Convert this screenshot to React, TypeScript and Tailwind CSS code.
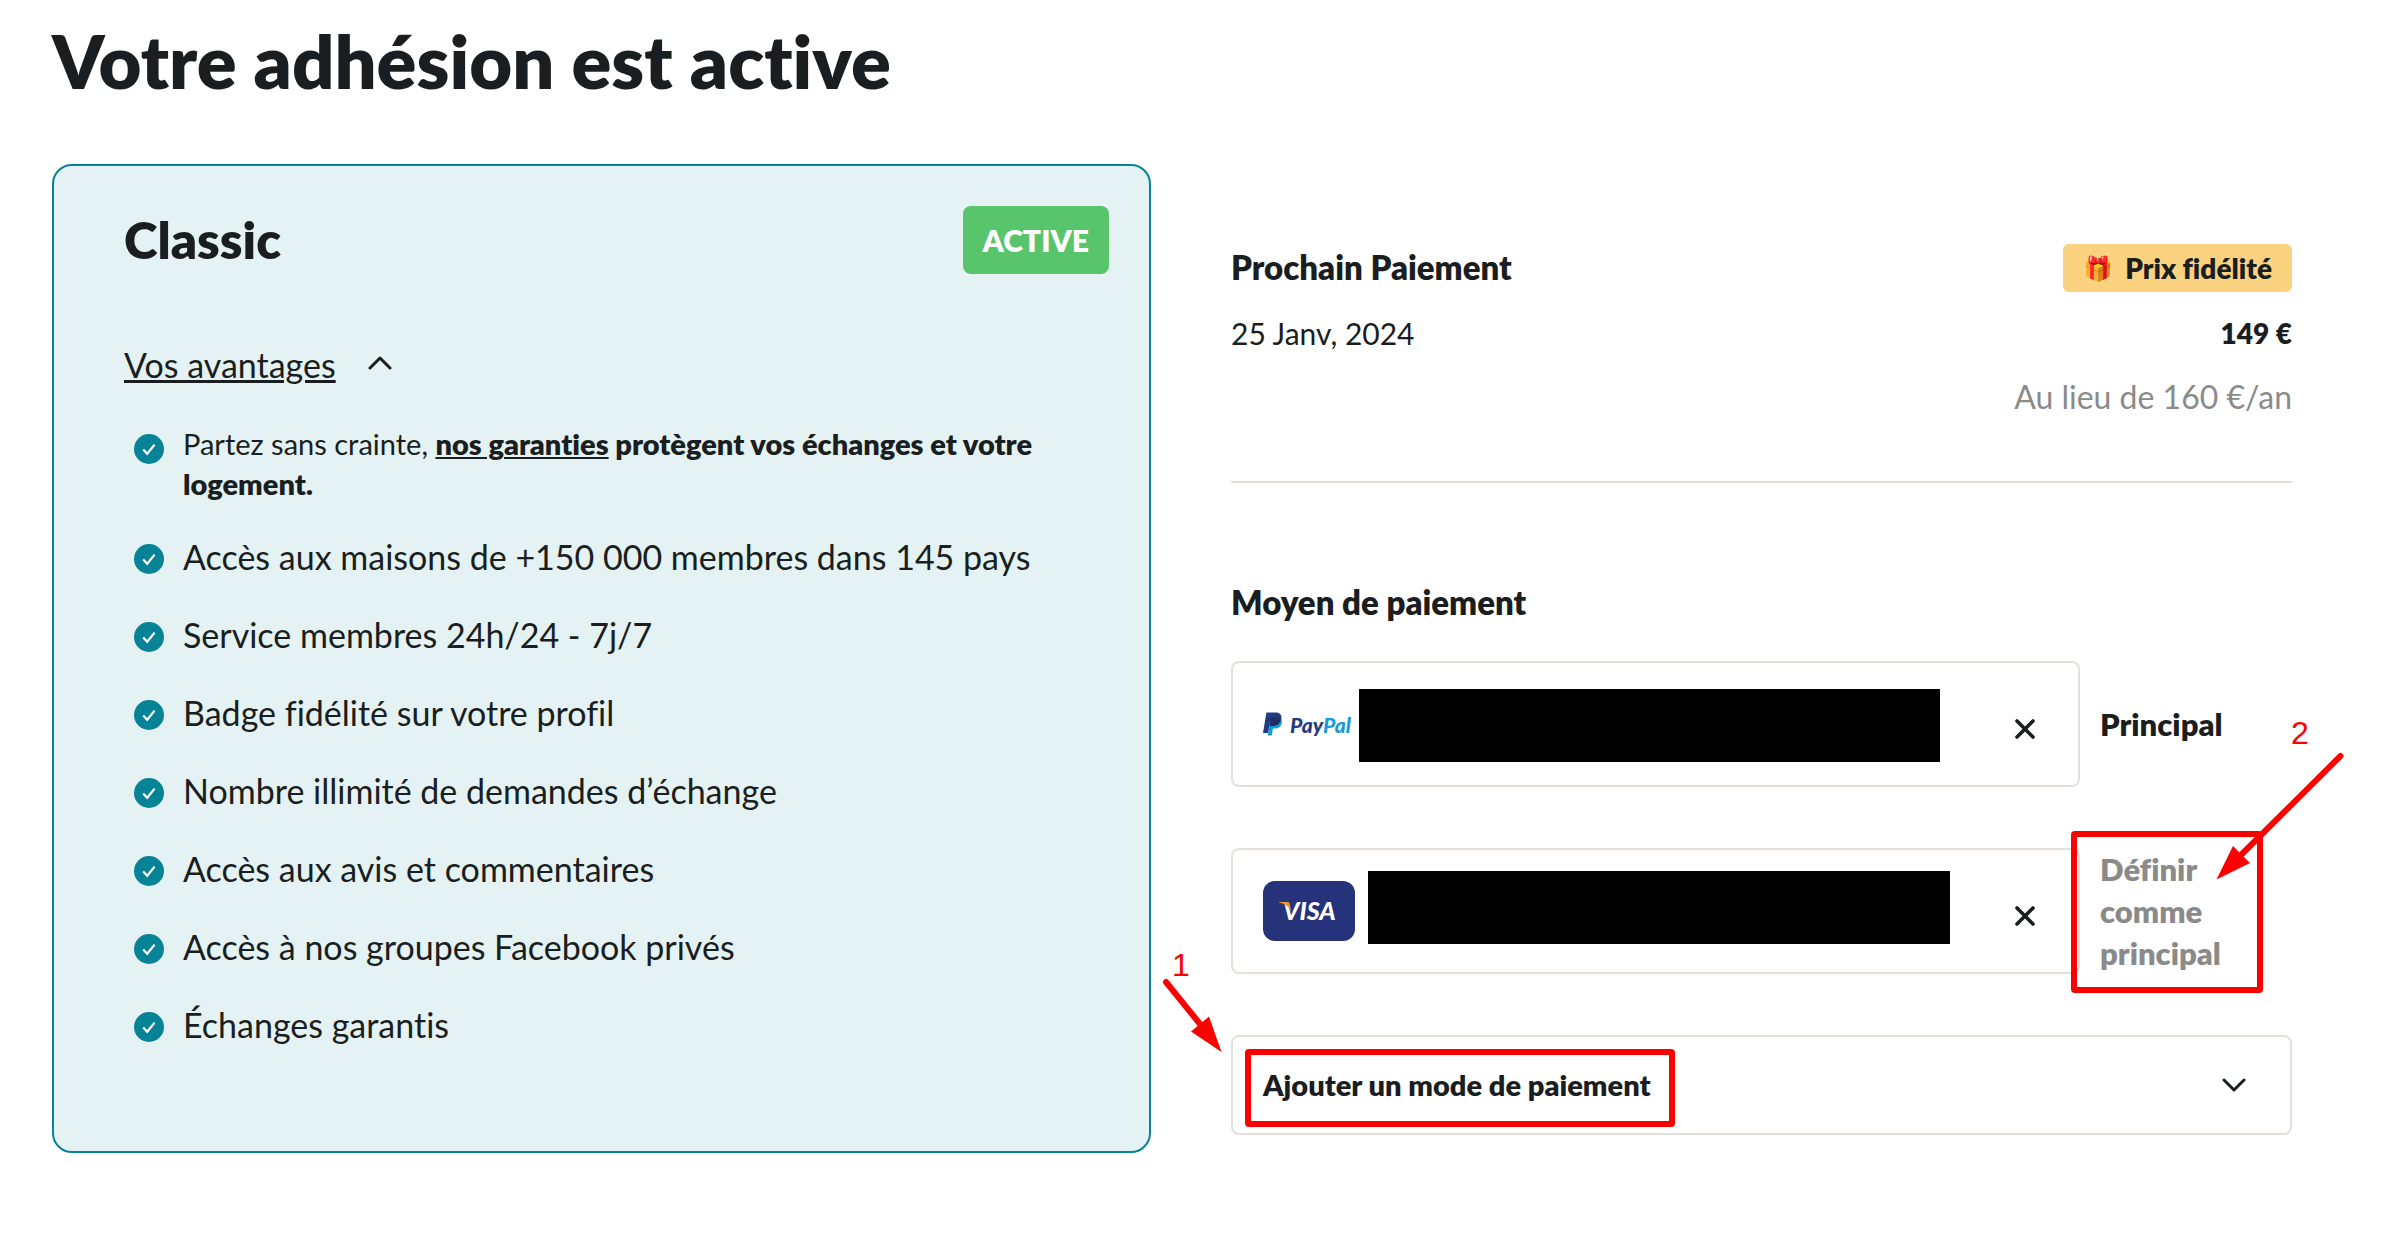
import React, { useState } from 'react';
import clsx from 'clsx';

const advantages = [
  'Accès aux maisons de +150 000 membres dans 145 pays',
  'Service membres 24h/24 - 7j/7',
  'Badge fidélité sur votre profil',
  'Nombre illimité de demandes d’échange',
  'Accès aux avis et commentaires',
  'Accès à nos groupes Facebook privés',
  'Échanges garantis',
];

interface IconProps {
  className?: string;
}

const CheckBadge: React.FC<IconProps> = ({ className }) => (
  <svg viewBox="0 0 30 30" className={clsx('h-[30px] w-[30px] shrink-0', className)} aria-hidden="true">
    <circle cx="15" cy="15" r="15" fill="#068396" />
    <path d="M9.2 15.6l4 4.2 7.4-9.2" fill="none" stroke="#fff" strokeWidth="2.2" />
  </svg>
);

const Chevron: React.FC<IconProps> = ({ className }) => (
  <svg viewBox="0 0 24 14" className={clsx('h-[14px] w-6 shrink-0', className)} aria-hidden="true">
    <path
      d="M2 2l10 10L22 2"
      fill="none"
      stroke="currentColor"
      strokeWidth="3"
      strokeLinecap="round"
      strokeLinejoin="round"
    />
  </svg>
);

const PayPalLogo = () => (
  <svg viewBox="0 0 92 30" className="h-[30px] w-[92px] shrink-0" role="img" aria-label="PayPal">
    <path d="M3.4 3.5h9c4.6 0 6.6 2.6 5.9 6.6-.9 5-4 6.9-8.3 6.9H6.6L5 24H0z" fill="#253b80" />
    <path
      d="M17.8 9.5c1.1 1.4 1.3 3 .9 4.800-.9 3.900-3.300 5.200-6.900 5.200h-1.100c-.5 0-.8.3-.9.8l-1 6.200H4.700L7 12.500z"
      fill="#179bd7"
    />
    <path d="M7.8 9.3c.1-.6.5-.8 1-.8h6c1.200 0 2.400.3 3.300 1-.8 5.200-3.800 7.500-8.200 7.500H6.600z" fill="#222d65" />
    <text x="27" y="24" className="font-[Lato,sans-serif] text-[21px] font-black italic" fill="#253b80">
      Pay<tspan fill="#179bd7">Pal</tspan>
    </text>
  </svg>
);

const VisaLogo = () => (
  <svg viewBox="0 0 92 60" className="h-[60px] w-[92px] shrink-0" role="img" aria-label="Visa">
    <rect width="92" height="60" rx="12" fill="#26337a" />
    <text x="20" y="39" className="font-[Lato,sans-serif] text-[25px] font-black italic" fill="#fff">
      VISA
    </text>
    <path d="M16 21h8.4c1.3 0 1.9.5 2.2 1.7l1.7 8.3c-1.7-4.3-5.300-7.700-12.300-9.400z" fill="#f0932b" />
  </svg>
);

const methods = [
  { id: 'paypal', logo: <PayPalLogo />, mask: 'ml-1 mr-[75px] mt-[2px]', primary: true },
  { id: 'visa', logo: <VisaLogo />, mask: 'ml-[13px] mr-[65px] mb-2', primary: false },
];

const AddMark = () => (
  <svg
    viewBox="0 0 520 190"
    className="pointer-events-none absolute -left-[71px] -top-[90px] h-[190px] w-[520px]"
    fill="#f00"
  >
    <text x="12" y="31" className="font-['Liberation_Sans',sans-serif] text-[32px] font-normal">1</text>
    <path d="M6 37l34 42" stroke="#f00" strokeWidth="6" strokeLinecap="round" />
    <path d="M49 71.5L61.5 107 31 86.5l9-7.5z" />
    <rect x="88" y="107" width="424" height="72" rx="1" fill="none" stroke="#f00" strokeWidth="6" />
  </svg>
);

const PrimaryMark = () => (
  <svg
    viewBox="0 0 280 290"
    className="pointer-events-none absolute -left-[29px] -top-[133px] h-[290px] w-[280px]"
    fill="#f00"
  >
    <text x="220" y="29" className="font-['Liberation_Sans',sans-serif] text-[32px] font-normal">2</text>
    <path d="M269.5 41L171 139" stroke="#f00" strokeWidth="6" strokeLinecap="round" />
    <path d="M162 131L145.5 164.5 179 148l-8-8z" />
    <rect x="3" y="119" width="186" height="156" rx="1" fill="none" stroke="#f00" strokeWidth="6" />
  </svg>
);

const PlanCard = () => {
  const [open, setOpen] = useState(true);

  return (
    <section className="rounded-[20px] border-2 border-[#068396] bg-[#e4f2f3] pt-10 pr-10 pb-[101px] pl-[70px]">
      <div className="flex items-center justify-between">
        <h2 className="text-[51px] leading-[68px] font-extrabold">Classic</h2>
        <span className="rounded-lg bg-[#58c46b] px-5 text-[30px] leading-[68px] font-extrabold text-white">
          ACTIVE
        </span>
      </div>
      <button
        type="button"
        aria-expanded={open}
        onClick={() => setOpen(!open)}
        className="mt-[68px] flex cursor-pointer items-center gap-8 text-[34px] leading-[46px]"
      >
        <span className="underline decoration-[3px] underline-offset-[2px]">Vos avantages</span>
        <Chevron className={clsx('mb-1', open && 'rotate-180')} />
      </button>
      {open && (
        <ul className="mt-9 pl-[10px]">
          <li className="mb-7 flex gap-[19px]">
            <CheckBadge className="mt-[10px]" />
            <p className="text-[29px] leading-[40px]">
              Partez sans crainte,{' '}
              <b className="font-extrabold">
                <a href="#garanties" className="underline decoration-2 underline-offset-[2px]">nos garanties</a>{' '}
                protègent vos échanges et votre logement.
              </b>
            </p>
          </li>
          {advantages.map((item) => (
            <li key={item} className="mb-7 flex gap-[19px] last:mb-0">
              <CheckBadge className="mt-3" />
              <span className="text-[34px] leading-[50px]">{item}</span>
            </li>
          ))}
        </ul>
      )}
    </section>
  );
};

const NextPayment = () => (
  <section className="flex flex-col gap-[19px] border-b-2 border-[#e5e0db] pb-[61px]">
    <div className="flex items-start justify-between">
      <h3 className="text-[33px] leading-[46px] font-extrabold">Prochain Paiement</h3>
      <span className="flex items-center gap-3 rounded-md bg-[#fbd280] px-5 text-[28px] leading-[48px] font-extrabold">
        <span className="text-2xl">🎁</span>
        Prix fidélité
      </span>
    </div>
    <div className="flex justify-between leading-[44px]">
      <span className="text-[30px]">25 Janv, 2024</span>
      <span className="text-[28px] font-extrabold">149 €</span>
    </div>
    <p className="text-right text-[32px] leading-[46px] text-[#8a8a8a]">Au lieu de 160 €/an</p>
  </section>
);

const PaymentMethods = () => (
  <section className="pt-24">
    <h3 className="text-[33px] leading-[46px] font-extrabold">Moyen de paiement</h3>
    <ul className="mt-9 flex flex-col gap-[61px]">
      {methods.map((method) => (
        <li key={method.id} className="flex min-h-[126px] gap-5">
          <div className="flex flex-1 items-center rounded-lg border-2 border-[#e5e0db] pr-[43px] pl-[30px]">
            {method.logo}
            <div className={clsx('h-[73px] flex-1 bg-black', method.mask)} />
            <button type="button" aria-label="Supprimer" className="mt-[10px] cursor-pointer">
              <svg viewBox="0 0 20 20" className="h-5 w-5" aria-hidden="true">
                <path d="M2 2l16 16M18 2L2 18" stroke="currentColor" strokeWidth="3.6" strokeLinecap="round" />
              </svg>
            </button>
          </div>
          <div className="relative flex w-48 items-center pr-16 text-[31px] leading-[42px] font-extrabold">
            {method.primary ? (
              <span>Principal</span>
            ) : (
              <>
                <button type="button" className="cursor-pointer text-left text-[#8a8a8a]">
                  Définir comme principal
                </button>
                <PrimaryMark />
              </>
            )}
          </div>
        </li>
      ))}
    </ul>
    <div className="relative mt-[61px]">
      <button
        type="button"
        className="flex w-full cursor-pointer items-center justify-between rounded-lg border-2 border-[#e5e0db] py-7 pr-11 pl-[30px] text-[29px] leading-[40px] font-extrabold"
      >
        Ajouter un mode de paiement
        <Chevron />
      </button>
      <AddMark />
    </div>
  </section>
);

const App = () => {
  return (
    <main className="min-h-screen bg-white pt-4 pr-[100px] pb-20 pl-[52px] font-[Lato,sans-serif] text-[#1a1e20] [font-variant-ligatures:none]">
      <h1 className="mb-[58px] text-[74px] leading-[90px] font-extrabold">Votre adhésion est active</h1>
      <div className="grid grid-cols-[1099fr_1061fr] gap-20">
        <PlanCard />
        <div className="pt-20">
          <NextPayment />
          <PaymentMethods />
        </div>
      </div>
    </main>
  );
};

export default App;
